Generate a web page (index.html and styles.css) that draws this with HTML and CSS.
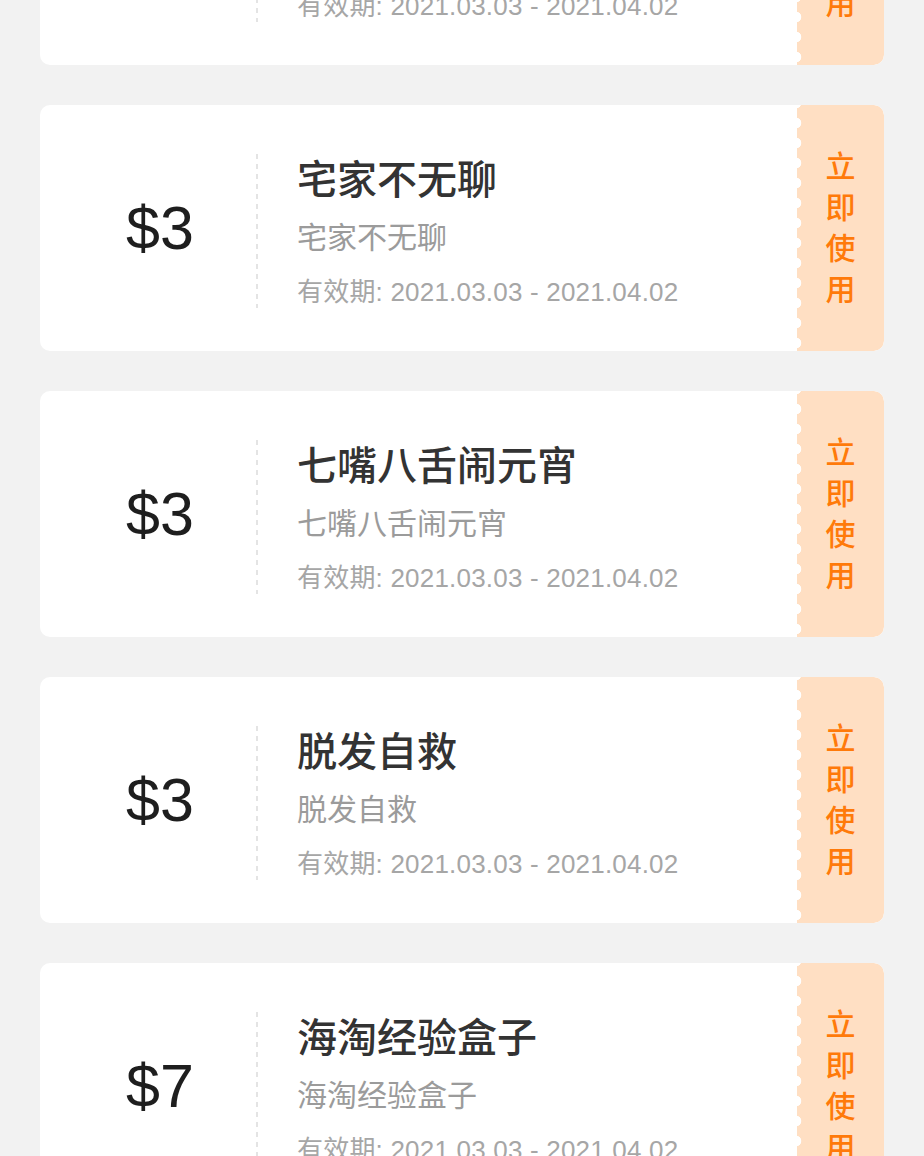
FILE: index.html
```html
<!DOCTYPE html>
<html lang="zh-CN">
<head>
<meta charset="utf-8">
<title>优惠券</title>
<link rel="stylesheet" href="styles.css">
</head>
<body>
<div class="list">
  <div class="card">
    <div class="amount">$3</div>
    <div class="divider"></div>
    <div class="info">
      <div class="title">宅家不无聊</div>
      <div class="desc">宅家不无聊</div>
      <div class="date">有效期: 2021.03.03 - 2021.04.02</div>
    </div>
    <div class="stub"><span class="stub-text">立即使用</span></div>
  </div>
  <div class="card">
    <div class="amount">$3</div>
    <div class="divider"></div>
    <div class="info">
      <div class="title">宅家不无聊</div>
      <div class="desc">宅家不无聊</div>
      <div class="date">有效期: 2021.03.03 - 2021.04.02</div>
    </div>
    <div class="stub"><span class="stub-text">立即使用</span></div>
  </div>
  <div class="card">
    <div class="amount">$3</div>
    <div class="divider"></div>
    <div class="info">
      <div class="title">七嘴八舌闹元宵</div>
      <div class="desc">七嘴八舌闹元宵</div>
      <div class="date">有效期: 2021.03.03 - 2021.04.02</div>
    </div>
    <div class="stub"><span class="stub-text">立即使用</span></div>
  </div>
  <div class="card">
    <div class="amount">$3</div>
    <div class="divider"></div>
    <div class="info">
      <div class="title">脱发自救</div>
      <div class="desc">脱发自救</div>
      <div class="date">有效期: 2021.03.03 - 2021.04.02</div>
    </div>
    <div class="stub"><span class="stub-text">立即使用</span></div>
  </div>
  <div class="card">
    <div class="amount">$7</div>
    <div class="divider"></div>
    <div class="info">
      <div class="title">海淘经验盒子</div>
      <div class="desc">海淘经验盒子</div>
      <div class="date">有效期: 2021.03.03 - 2021.04.02</div>
    </div>
    <div class="stub"><span class="stub-text">立即使用</span></div>
  </div>
</div>
</body>
</html>
```
FILE: styles.css
```css
html, body {
  margin: 0;
  padding: 0;
  background: #f2f2f2;
}
body {
  font-family: "Liberation Sans", "Noto Sans CJK SC", sans-serif;
  overflow: hidden;
  height: 1156px;
}
.list {
  display: flex;
  flex-direction: column;
  gap: 40px;
  padding: 0 40px;
  margin-top: -181px;
}
.card {
  display: flex;
  align-items: center;
  height: 246px;
  background: #fff;
  border-radius: 10px;
  overflow: hidden;
}
.amount {
  width: 192px;
  padding-left: 24px;
  text-align: center;
  font-size: 61px;
  line-height: 70px;
  color: #1e1e1e;
}
.divider {
  width: 2px;
  height: 154px;
  margin-top: 5px;
  background: repeating-linear-gradient(to bottom, #e4e4e4 0 5px, transparent 5px 10px);
}
.info {
  flex: 1;
  align-self: flex-start;
  padding-top: 47px;
  padding-left: 39px;
}
.title {
  font-size: 40px;
  line-height: 56px;
  font-weight: 500;
  color: #333;
}
.desc {
  font-size: 30px;
  line-height: 60px;
  color: #9b9b9b;
}
.date {
  font-size: 26px;
  line-height: 48px;
  letter-spacing: 0.2px;
  color: #a6a6a6;
}
.stub {
  align-self: stretch;
  width: 87px;
  display: flex;
  align-items: center;
  justify-content: center;
  background-color: #ffdfc3;
  background-image: radial-gradient(circle at 0 50%, #fff 5px, rgba(255,255,255,0) 5.6px);
  background-size: 10px 20px;
  background-repeat: repeat-y;
  background-position: -1px 8px;
  border-radius: 0 10px 10px 0;
}
.stub-text {
  display: block;
  width: 30px;
  font-size: 30px;
  line-height: 41px;
  font-weight: 500;
  color: #ff7a0a;
  text-align: center;
}
```
